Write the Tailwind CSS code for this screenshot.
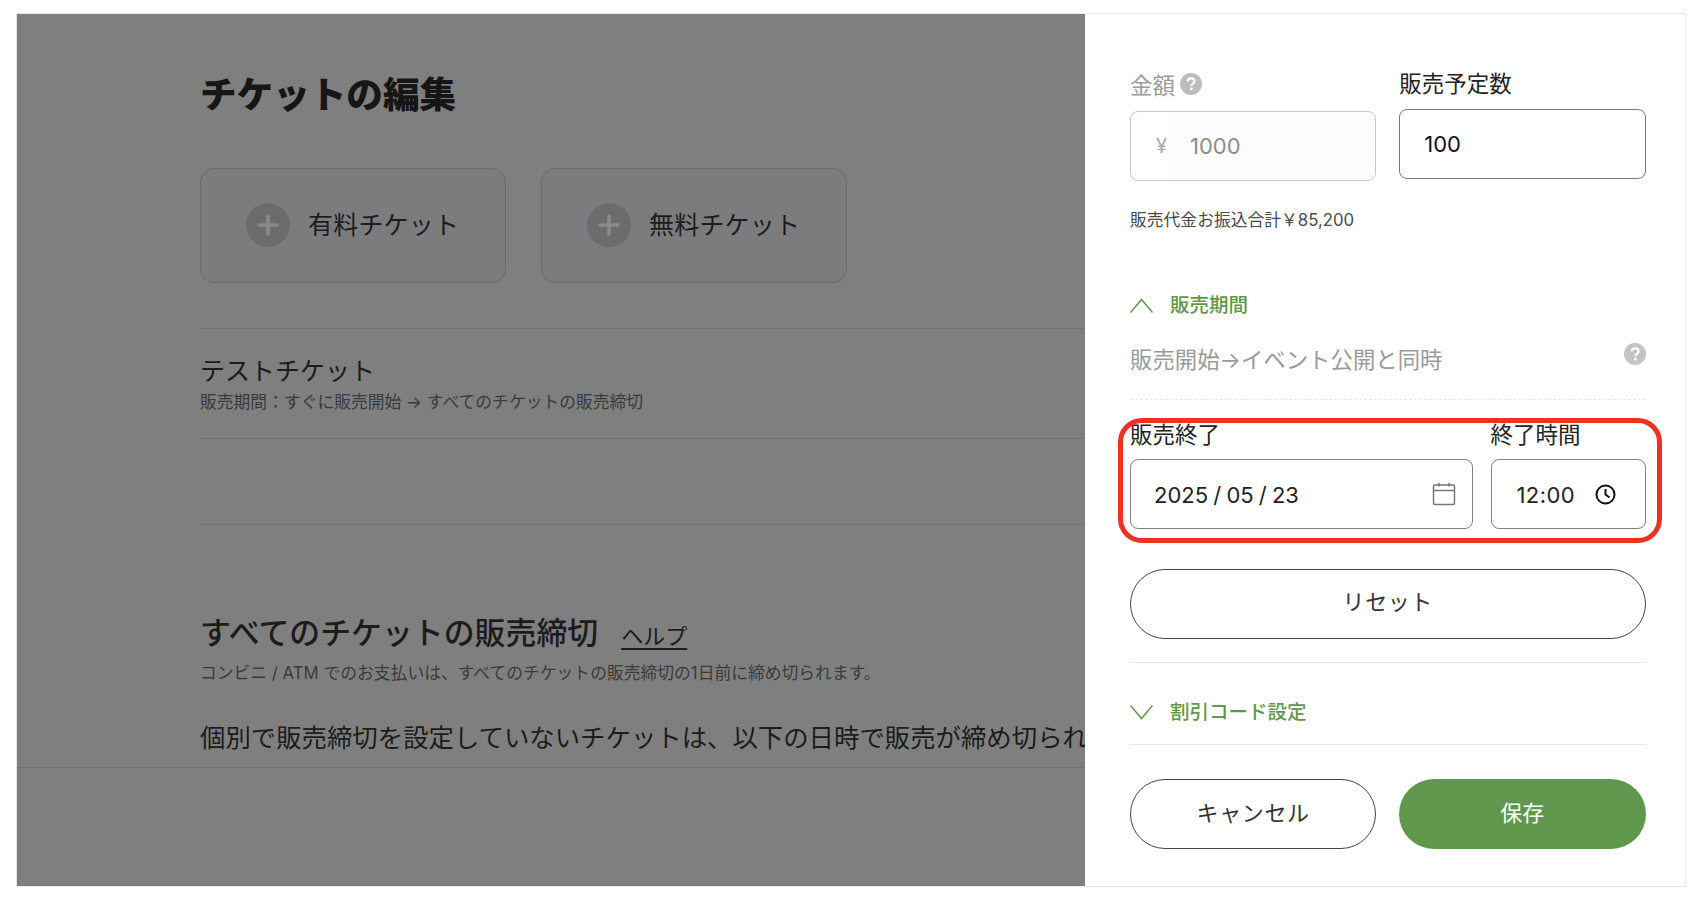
<!DOCTYPE html>
<html lang="ja">

<head>
    <meta charset="UTF-8">
    <meta name="viewport" content="width=device-width, initial-scale=1.0">
    <title>チケットの編集</title>
    <script src="https://cdn.jsdelivr.net/npm/@tailwindcss/browser@4"></script>
</head>

<body class="bg-white font-['Inter','Noto_Sans_CJK_JP',sans-serif] text-[#222]">
    <div class="ml-[16px] mt-[13px] flex h-[874px] w-[1670px] overflow-hidden border border-[#e8e8e8]">

        <!-- dimmed page behind the panel -->
        <main class="flex w-[1068px] shrink-0 flex-col overflow-hidden bg-[#7f7f7f] text-[#1c1c1c]">
            <div class="pl-[183px] pt-[61px]">
                <h1 class="text-[36.600px] leading-[40px] font-black text-[#161616]">チケットの編集</h1>

                <div class="mt-[53px] flex gap-[35px]">
                    <button class="flex h-[115px] w-[306px] items-center gap-[18px] rounded-[14px] border border-[#6a6a6a] bg-[#7c7c7e] pb-[1px] pl-[45px]">
                        <span class="flex size-[44px] items-center justify-center rounded-full bg-[#6c6c6c]">
                            <svg width="24" height="24" viewBox="0 0 24 24" fill="none" stroke="#8a8a8a" stroke-width="3.500" stroke-linecap="round"><path d="M12 3v18M3 12h18"/></svg>
                        </span>
                        <span class="text-[25px] leading-[30px] tracking-[0.2px]">有料チケット</span>
                    </button>
                    <button class="flex h-[115px] w-[306px] items-center gap-[18px] rounded-[14px] border border-[#6a6a6a] bg-[#7c7c7e] pb-[1px] pl-[45px]">
                        <span class="flex size-[44px] items-center justify-center rounded-full bg-[#6c6c6c]">
                            <svg width="24" height="24" viewBox="0 0 24 24" fill="none" stroke="#8a8a8a" stroke-width="3.500" stroke-linecap="round"><path d="M12 3v18M3 12h18"/></svg>
                        </span>
                        <span class="text-[25px] leading-[30px] tracking-[0.2px]">無料チケット</span>
                    </button>
                </div>

                <div class="mt-[45px] border-y border-[#717171] pb-[26px] pt-[27px]">
                    <p class="text-[25px] leading-[30px]">テストチケット</p>
                    <p class="mt-[6px] text-[16.800px] leading-[20px] text-[#3a3a3a]">販売期間：すぐに販売開始 → すべてのチケットの販売締切</p>
                </div>
                <div class="h-[86px] border-b border-[#717171]"></div>

                <div class="mt-[90px] flex items-end gap-[23px]">
                    <h2 class="text-[30.900px] leading-[36px] font-medium whitespace-nowrap">すべてのチケットの販売締切</h2>
                    <a class="text-[22px] leading-[30px] underline underline-offset-4">ヘルプ</a>
                </div>
                <p class="mt-[12px] text-[16.800px] leading-[20px] whitespace-nowrap text-[#3a3a3a]">コンビニ / ATM でのお支払いは、すべてのチケットの販売締切の1日前に締め切られます。</p>
                <p class="mt-[38px] text-[25.400px] leading-[34px] whitespace-nowrap">個別で販売締切を設定していないチケットは、以下の日時で販売が締め切られます。</p>
            </div>
            <div class="mt-[12px] border-t border-[#717171]"></div>
        </main>

        <!-- side panel -->
        <aside class="w-[600px] shrink-0 bg-white pl-[45px] pr-[39.500px] pt-[55px]">
            <div class="grid grid-cols-2 items-start gap-x-[23px]">
                <div class="mt-[2px]">
                    <div class="flex items-center gap-[5px] text-[22.500px] leading-[30px] text-[#9a9a9a]">
                        金額
                        <svg class="-mt-[5px]" width="22" height="22" viewBox="0 0 22 22"><circle cx="11" cy="11" r="11" fill="#bdbdbd"/><path d="M7.6 8.4c.2-2 1.600-3 3.500-3 2 0 3.400 1.100 3.400 2.800 0 2.400-3.100 2.400-3.100 4.800" fill="none" stroke="#fff" stroke-width="2.200"/><circle cx="11.300" cy="16" r="1.400" fill="#fff"/></svg>
                    </div>
                    <div class="mt-[10px] flex h-[70px] overflow-hidden rounded-[8px] border border-[#c8c8c8] text-[22px] text-[#8c8c8c]">
                        <span class="flex w-[37px] shrink-0 items-center justify-end pr-[1px] text-[20px] text-[#a8a8a8]">¥</span>
                        <span class="flex flex-1 items-center bg-[#fcfcfe] pl-[22px]">1000</span>
                    </div>
                </div>
                <div>
                    <div class="text-[22.500px] leading-[30px]">販売予定数</div>
                    <div class="mt-[10px] flex h-[70px] items-center rounded-[8px] border border-[#777] pl-[24px] text-[22px] text-[#111]">100</div>
                </div>
            </div>

            <p class="mt-[29px] text-[16.800px] leading-[20px] text-[#4a4a4a]">販売代金お振込合計￥85,200</p>

            <div class="mt-[63px] flex items-center gap-[17px] text-[19.500px] leading-[24px] font-medium text-[#5f984c]">
                <svg width="23" height="15" viewBox="0 0 23 15" fill="none" stroke="#5f984c" stroke-width="1.500"><path d="M.5 14.500 11.500 1.500l11 13"/></svg>
                販売期間
            </div>

            <div class="mt-[27px] flex items-start justify-between border-b border-dashed border-[#e6e6e6] pb-[23px]">
                <span class="text-[22.400px] leading-[32px] text-[#9a9a9a]">販売開始→イベント公開と同時</span>
                <svg width="22" height="22" viewBox="0 0 22 22" class="-mt-[1px]"><circle cx="11" cy="11" r="11" fill="#c4c4c4"/><path d="M7.6 8.400c.2-2 1.600-3 3.500-3 2 0 3.400 1.100 3.400 2.800 0 2.400-3.100 2.400-3.100 4.800" fill="none" stroke="#fff" stroke-width="2.200"/><circle cx="11.300" cy="16" r="1.400" fill="#fff"/></svg>
            </div>

            <!-- sale end, ringed in red -->
            <div class="relative mt-[20px] flex gap-[17.500px]">
                <div class="w-[343px]">
                    <div class="text-[22.500px] leading-[30px]">販売終了</div>
                    <div class="mt-[9px] flex h-[70px] items-center justify-between rounded-[8px] border border-[#808080] pl-[23px] pr-[16px] text-[22px]">
                        <span class="pt-[2px] [word-spacing:-1px]">2025 / 05 / 23</span>
                        <svg width="24" height="24" viewBox="0 0 24 24" fill="none" stroke="#777" stroke-width="1.500"><rect x="1.500" y="3" width="21" height="19.500" rx="1.500"/><path d="M1.500 8.500h21M7 1v3.500M17 1v3.500"/></svg>
                    </div>
                </div>
                <div class="w-[155px]">
                    <div class="text-[22.500px] leading-[30px]">終了時間</div>
                    <div class="mt-[9px] flex h-[70px] items-center gap-[20px] rounded-[8px] border border-[#808080] pl-[25px] text-[22px]">
                        <span class="pt-[2px] tracking-[0.4px]">12:00</span>
                        <svg width="21" height="21" viewBox="0 0 21 21" fill="none" stroke="#111" stroke-width="2"><circle cx="10.500" cy="10.500" r="9"/><path d="M10.500 5v5.500l4 3"/></svg>
                    </div>
                </div>
                <div class="pointer-events-none absolute -bottom-[14px] -left-[12px] -right-[16.500px] -top-[2px] rounded-[24px] border-[5px] border-[#ee3124]"></div>
            </div>

            <button class="mt-[40px] block h-[70px] w-full rounded-full border border-[#444] pb-[3px] text-[22px] tracking-[0.6px] text-[#333]">リセット</button>
            <div class="mt-[23px] border-t border-[#e8e8ec]"></div>

            <div class="mt-[37px] flex items-center gap-[17px] text-[19.500px] leading-[24px] font-medium text-[#5f984c]">
                <svg width="23" height="15" viewBox="0 0 23 15" fill="none" stroke="#5f984c" stroke-width="1.500"><path d="M.5.500 11.500 13.500l11-13"/></svg>
                割引コード設定
            </div>
            <div class="mt-[20px] border-t border-[#e8e8ec]"></div>

            <div class="mt-[34px] grid grid-cols-2 gap-x-[23px]">
                <button class="h-[70px] rounded-full border border-[#444] pb-[2px] text-[22px] tracking-[0.6px] text-[#333]">キャンセル</button>
                <button class="h-[70px] rounded-full bg-[#5f984c] pb-[2px] text-[22px] text-white">保存</button>
            </div>
        </aside>
    </div>
</body>

</html>
